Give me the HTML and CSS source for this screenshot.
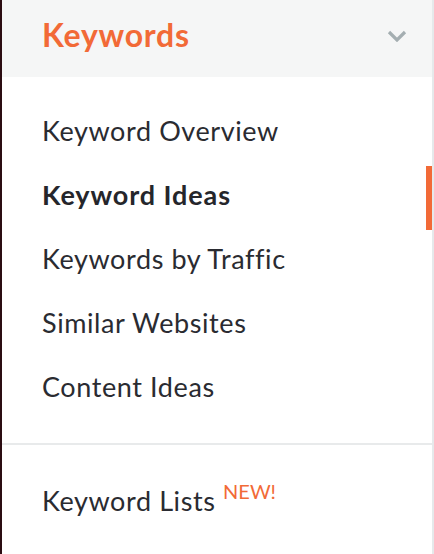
FILE: index.html
```html
<!DOCTYPE html>
<html lang="en">
<head>
    <meta charset="UTF-8">
    <meta name="viewport" content="width=device-width, initial-scale=1.0">
    <title>Keywords</title>
    <link rel="stylesheet" href="styles.css">
</head>
<body>
    <nav class="sidebar">
        <div class="section-header">
            <span class="section-title">Keywords</span>
            <svg class="chevron" width="20" height="12" viewBox="0 0 20 12">
                <polyline points="2,2 10,10 18,2" fill="none" stroke="#a4aeb1" stroke-width="3.2"/>
            </svg>
        </div>

        <ul class="menu">
            <li class="menu-item">Keyword Overview</li>
            <li class="menu-item active">Keyword Ideas</li>
            <li class="menu-item">Keywords by Traffic</li>
            <li class="menu-item">Similar Websites</li>
            <li class="menu-item">Content Ideas</li>
        </ul>

        <ul class="menu menu-extra">
            <li class="menu-item">Keyword Lists <sup class="badge-new">NEW!</sup></li>
        </ul>
    </nav>
</body>
</html>
```

FILE: styles.css
```css
body {
    margin: 0;
    background-color: #fff;
    font-family: "Lato", "Noto Sans", sans-serif;
    color: #2a2b31;
}

.sidebar {
    width: 430px;
    height: 554px;
    border-left: 2px solid #2b0d12;
    border-right: 2px solid #e6e9eb;
    background-color: #fff;
}

.section-header {
    height: 77px;
    background-color: #f5f6f6;
    display: flex;
    justify-content: space-between;
    align-items: center;
    padding: 0 25px 0 40px;
}

.section-title {
    color: #f26a37;
    font-weight: bold;
    font-size: 32px;
    letter-spacing: 0.75px;
    margin-top: -9px;
}

.chevron {
    display: block;
    margin-top: -6px;
}

.menu {
    list-style: none;
    margin: 0;
    padding: 22px 0 24px;
    border-bottom: 2px solid #e8eaeb;
}

.menu-item {
    position: relative;
    height: 64px;
    line-height: 64px;
    padding-left: 40px;
    font-size: 27px;
    letter-spacing: 0.6px;
}

.menu-item.active {
    font-weight: bold;
    color: #25262b;
    letter-spacing: 0.9px;
}

/* Barra laranja do item ativo */
.menu-item.active::after {
    content: "";
    position: absolute;
    top: 3px;
    right: 0;
    width: 6px;
    height: 64px;
    background-color: #f26a37;
}

.menu-extra {
    border-bottom: none;
    padding-top: 24px;
}

.badge-new {
    color: #f26a37;
    font-size: 20px;
    letter-spacing: 0;
    vertical-align: 0;
    position: relative;
    top: -12px;
}
```
